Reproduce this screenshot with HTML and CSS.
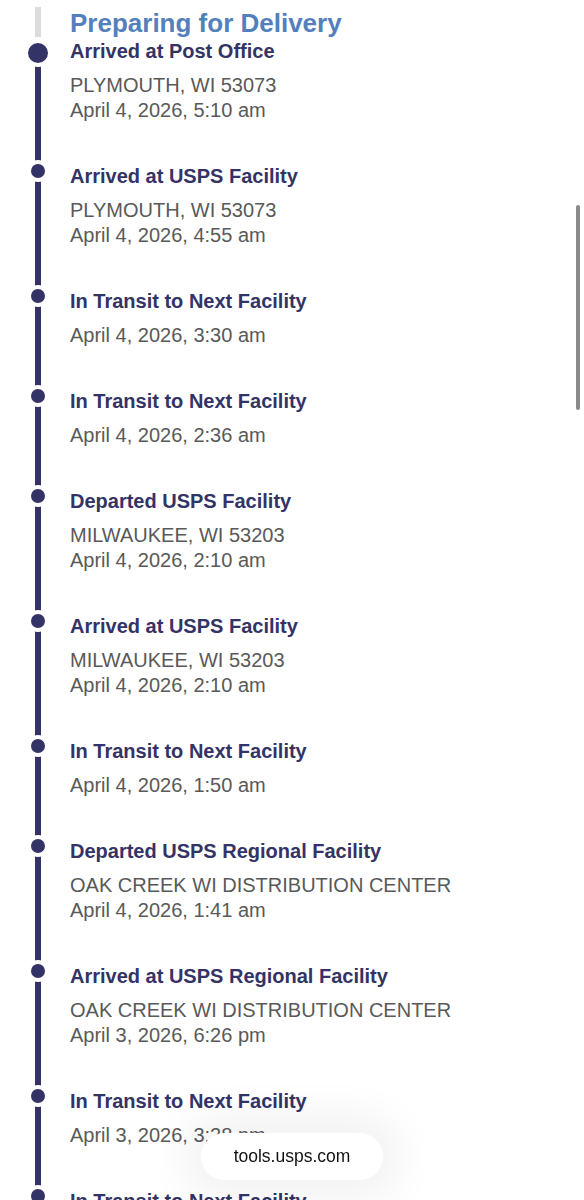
FILE: index.html
```html
<!DOCTYPE html>
<html lang="en">
<head>
  <meta charset="UTF-8" />
  <meta name="viewport" content="width=device-width, initial-scale=1.0"/>
  <title>USPS Tracking</title>
  <link rel="stylesheet" href="styles.css">
</head>
<body>
  <div class="tracking">
    <div class="phase">Preparing for Delivery</div>

    <ul class="events">
      <li class="event current">
        <div class="event-title">Arrived at Post Office</div>
        <div class="event-info">PLYMOUTH, WI 53073</div>
        <div class="event-info">April 4, 2026, 5:10 am</div>
      </li>
      <li class="event">
        <div class="event-title">Arrived at USPS Facility</div>
        <div class="event-info">PLYMOUTH, WI 53073</div>
        <div class="event-info">April 4, 2026, 4:55 am</div>
      </li>
      <li class="event">
        <div class="event-title">In Transit to Next Facility</div>
        <div class="event-info">April 4, 2026, 3:30 am</div>
      </li>
      <li class="event">
        <div class="event-title">In Transit to Next Facility</div>
        <div class="event-info">April 4, 2026, 2:36 am</div>
      </li>
      <li class="event">
        <div class="event-title">Departed USPS Facility</div>
        <div class="event-info">MILWAUKEE, WI 53203</div>
        <div class="event-info">April 4, 2026, 2:10 am</div>
      </li>
      <li class="event">
        <div class="event-title">Arrived at USPS Facility</div>
        <div class="event-info">MILWAUKEE, WI 53203</div>
        <div class="event-info">April 4, 2026, 2:10 am</div>
      </li>
      <li class="event">
        <div class="event-title">In Transit to Next Facility</div>
        <div class="event-info">April 4, 2026, 1:50 am</div>
      </li>
      <li class="event">
        <div class="event-title">Departed USPS Regional Facility</div>
        <div class="event-info">OAK CREEK WI DISTRIBUTION CENTER</div>
        <div class="event-info">April 4, 2026, 1:41 am</div>
      </li>
      <li class="event">
        <div class="event-title">Arrived at USPS Regional Facility</div>
        <div class="event-info">OAK CREEK WI DISTRIBUTION CENTER</div>
        <div class="event-info">April 3, 2026, 6:26 pm</div>
      </li>
      <li class="event">
        <div class="event-title">In Transit to Next Facility</div>
        <div class="event-info">April 3, 2026, 3:28 pm</div>
      </li>
      <li class="event">
        <div class="event-title">In Transit to Next Facility</div>
        <div class="event-info">April 3, 2026, 11:02 am</div>
      </li>
    </ul>
  </div>

  <!-- browser chrome over the page -->
  <div class="scroll-thumb"></div>
  <div class="url-pill">tools.usps.com</div>
</body>
</html>
```

FILE: styles.css
```css
html {
  overflow: hidden;
}

body {
  font-family: "Liberation Sans", Arial, sans-serif;
  background: #fff;
  margin: 0;
  padding: 0;
}

.tracking {
  padding-bottom: 40px;
}

.phase {
  position: relative;
  padding: 7px 0 0 70px;
  height: 33px;
  line-height: 33px;
  font-size: 26px;
  font-weight: bold;
  color: #5380bb;
}

.phase::before {
  content: "";
  position: absolute;
  left: 35px;
  top: 7px;
  bottom: 3px;
  width: 6px;
  background: #dcdcdc;
}

.events {
  list-style: none;
  margin: 0;
  padding: 0;
}

.event {
  position: relative;
  padding: 0 0 42px 70px;
}

/* the timeline rail */
.event::before {
  content: "";
  position: absolute;
  left: 35px;
  top: 0;
  bottom: 0;
  width: 6px;
  background: #333366;
}

/* the dot, with a white ring that cuts the rail */
.event::after {
  content: "";
  position: absolute;
  left: 27px;
  top: -5px;
  width: 14px;
  height: 14px;
  border: 4px solid #fff;
  border-radius: 50%;
  background: #333366;
}

.event.current::after {
  left: 24px;
  top: -1px;
  width: 20px;
  height: 20px;
}

.event-title {
  font-size: 20px;
  line-height: 23px;
  font-weight: bold;
  color: #333366;
  margin-bottom: 10px;
}

.event-info {
  font-size: 20px;
  line-height: 25px;
  color: #595959;
}

.scroll-thumb {
  position: fixed;
  right: 4px;
  top: 205px;
  width: 4px;
  height: 205px;
  border-radius: 2px;
  background: #8a8a8a;
}

.url-pill {
  position: fixed;
  left: 50%;
  top: 1133px;
  transform: translateX(-50%);
  width: 182px;
  height: 47px;
  line-height: 47px;
  border-radius: 24px;
  background: #fff;
  box-shadow: 0 0 40px 20px rgba(0, 0, 0, 0.05);
  text-align: center;
  font-size: 17.5px;
  color: #111;
}
```
